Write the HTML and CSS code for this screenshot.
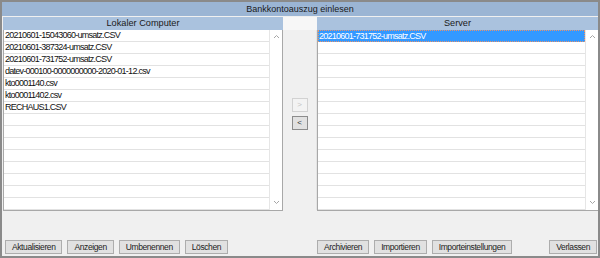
FILE: index.html
```html
<!DOCTYPE html>
<html lang="de">
<head>
    <meta charset="UTF-8">
    <title>Bankkontoauszug einlesen</title>
    <link rel="stylesheet" href="styles.css">
</head>
<body>
<div class="window">
    <div class="title">Bankkontoauszug einlesen</div>

    <div class="main">
        <div class="panel left">
            <div class="panel-head">Lokaler Computer</div>
            <div class="list">
                <div class="rows">
                    <div class="row">20210601-15043060-umsatz.CSV</div>
                    <div class="row">20210601-387324-umsatz.CSV</div>
                    <div class="row">20210601-731752-umsatz.CSV</div>
                    <div class="row">datev-000100-0000000000-2020-01-12.csv</div>
                    <div class="row">kto0001140.csv</div>
                    <div class="row">kto00011402.csv</div>
                    <div class="row">RECHAUS1.CSV</div>
                    <div class="row"></div>
                    <div class="row"></div>
                    <div class="row"></div>
                    <div class="row"></div>
                    <div class="row"></div>
                    <div class="row"></div>
                    <div class="row"></div>
                    <div class="row"></div>
                </div>
                <div class="scroll">
                    <svg width="7" height="5" viewBox="0 0 7 5"><path d="M1 4 L3.5 1.5 L6 4" fill="none" stroke="#a6a6a6" stroke-width="1"/></svg>
                    <svg width="7" height="5" viewBox="0 0 7 5"><path d="M1 1 L3.5 3.5 L6 1" fill="none" stroke="#a6a6a6" stroke-width="1"/></svg>
                </div>
            </div>
        </div>

        <div class="middle">
            <div class="middle-head"></div>
            <div class="middle-body">
                <button class="arrow" disabled>&gt;</button>
                <button class="arrow active">&lt;</button>
            </div>
        </div>

        <div class="panel right">
            <div class="panel-head">Server</div>
            <div class="list">
                <div class="rows">
                    <div class="row selected">20210601-731752-umsatz.CSV</div>
                    <div class="row"></div>
                    <div class="row"></div>
                    <div class="row"></div>
                    <div class="row"></div>
                    <div class="row"></div>
                    <div class="row"></div>
                    <div class="row"></div>
                    <div class="row"></div>
                    <div class="row"></div>
                    <div class="row"></div>
                    <div class="row"></div>
                    <div class="row"></div>
                    <div class="row"></div>
                    <div class="row"></div>
                </div>
                <div class="scroll">
                    <svg width="7" height="5" viewBox="0 0 7 5"><path d="M1 4 L3.5 1.5 L6 4" fill="none" stroke="#a6a6a6" stroke-width="1"/></svg>
                    <svg width="7" height="5" viewBox="0 0 7 5"><path d="M1 1 L3.5 3.5 L6 1" fill="none" stroke="#a6a6a6" stroke-width="1"/></svg>
                </div>
            </div>
        </div>
    </div>

    <div class="footer">
        <div class="buttons">
            <button class="btn">Aktualisieren</button>
            <button class="btn">Anzeigen</button>
            <button class="btn">Umbenennen</button>
            <button class="btn">Löschen</button>
        </div>
        <div></div>
        <div class="buttons">
            <button class="btn">Archivieren</button>
            <button class="btn">Importieren</button>
            <button class="btn">Importeinstellungen</button>
            <button class="btn quit">Verlassen</button>
        </div>
    </div>
</div>
</body>
</html>
```

FILE: styles.css
```css
body {
    margin: 0;
    font-family: "Liberation Sans", Arial, sans-serif;
    background-color: #f0f0f0;
    color: #000;
}

.window {
    box-sizing: border-box;
    width: 600px;
    height: 258px;
    border: 2px solid #8a8a8a;
    background-color: #f0f0f0;
    display: flex;
    flex-direction: column;
}

.title {
    height: 14px;
    line-height: 14px;
    margin-bottom: 1px;
    background-color: #9bb5d4;
    text-align: center;
    font-size: 9px;
    color: #1a1a1a;
}

.main {
    display: grid;
    grid-template-columns: 280px 34px 1fr;
    padding-left: 1px;
}

.panel-head {
    height: 13px;
    line-height: 13px;
    background-color: #aac2de;
    text-align: center;
    font-size: 9.2px;
    color: #1a1a1a;
}

.list {
    display: flex;
    height: 180px;
    border-left: 1px solid #a8a8a8;
    border-bottom: 1px solid #a8a8a8;
    background-color: #fff;
}

.rows {
    flex: 1;
    min-width: 0;
}

.row {
    box-sizing: border-box;
    height: 12px;
    line-height: 11px;
    padding-left: 1px;
    border-bottom: 1px solid #e2e2e2;
    font-size: 9px;
    letter-spacing: -0.75px;
    white-space: nowrap;
    overflow: hidden;
    color: #111;
}

.row.selected {
    background-color: #3399ff;
    color: #fff;
    border: 1px dotted #e8926a;
    line-height: 10px;
    padding-left: 0;
}

.scroll {
    width: 12px;
    border-left: 1px solid #e6e6e6;
    border-right: 1px solid #a8a8a8;
    background-color: #fff;
    display: flex;
    flex-direction: column;
    justify-content: space-between;
    align-items: center;
    padding: 4px 0 5px;
}

.panel.right .scroll {
    border-right: none;
}

.middle {
    display: flex;
    flex-direction: column;
}

.middle-head {
    height: 13px;
    background-color: #f7f7f7;
}

.middle-body {
    height: 180px;
    display: flex;
    flex-direction: column;
    align-items: center;
    gap: 4px;
    padding-top: 68px;
    box-sizing: border-box;
    border-right: 1px solid #e4e4e4;
}

.arrow {
    width: 16px;
    height: 14px;
    padding: 0;
    font-family: "Liberation Sans", Arial, sans-serif;
    font-size: 8px;
    line-height: 12px;
    border: 1px solid #d2d2d2;
    background-color: #f3f3f3;
    color: #c4c4c4;
}

.arrow.active {
    border-color: #8c8c8c;
    background-color: #e1e1e1;
    color: #333;
}

.footer {
    display: grid;
    grid-template-columns: 281px 34px 1fr;
    padding-top: 29px;
}

.buttons {
    display: flex;
    gap: 5px;
}

.footer .buttons:first-child {
    padding-left: 3px;
}

.btn {
    height: 14px;
    padding: 0 6px;
    font-family: "Liberation Sans", Arial, sans-serif;
    font-size: 8.5px;
    letter-spacing: -0.4px;
    line-height: 12px;
    border: 1px solid #adadad;
    background-color: #e1e1e1;
    color: #222;
}

.btn.quit {
    margin-left: auto;
    margin-right: 1px;
}
```
